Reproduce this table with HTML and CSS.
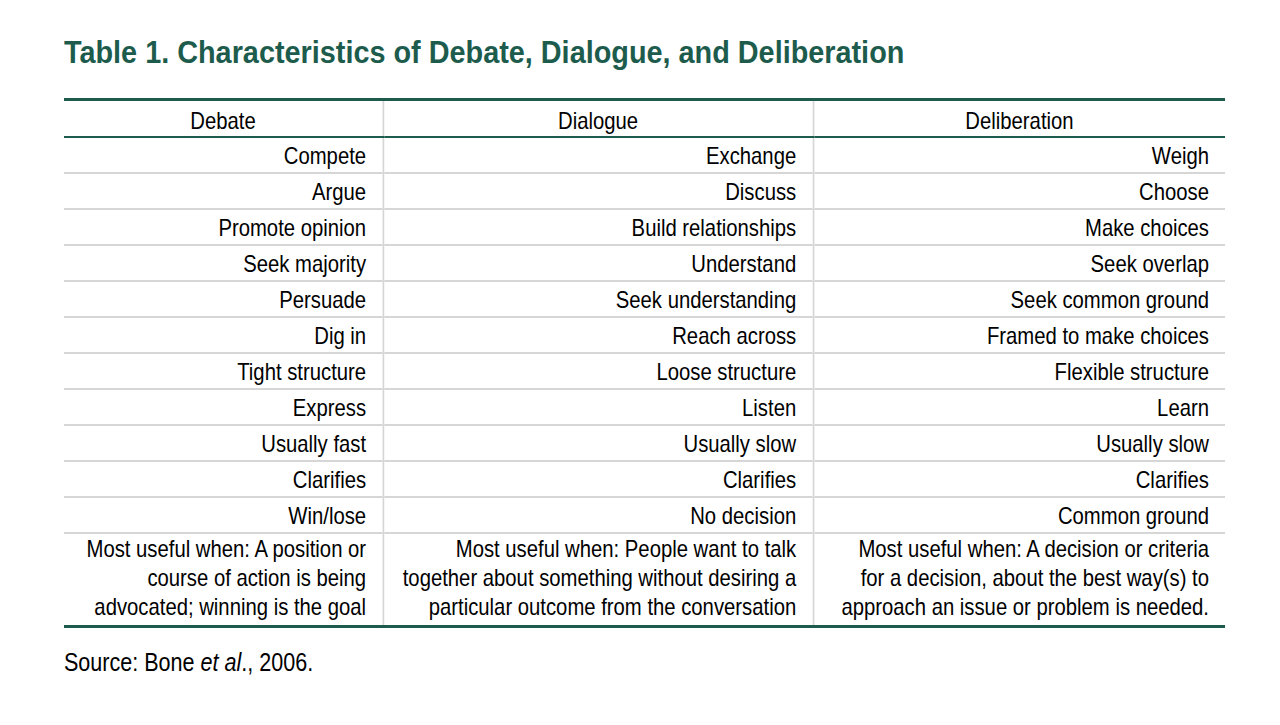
FILE: index.html
```html
<!DOCTYPE html>
<html>
<head>
<meta charset="utf-8">
<link rel="stylesheet" href="styles.css">
</head>
<body>
<div class="page">
  <div class="title-wrap">
    <h1 class="title">Table 1. Characteristics of Debate, Dialogue, and Deliberation</h1>
  </div>
  <div class="narrow">
    <table class="tbl">
      <colgroup>
        <col class="c1"><col class="c2"><col class="c3">
      </colgroup>
      <thead>
        <tr><th>Debate</th><th>Dialogue</th><th>Deliberation</th></tr>
      </thead>
      <tbody>
        <tr><td>Compete</td><td>Exchange</td><td>Weigh</td></tr>
        <tr><td>Argue</td><td>Discuss</td><td>Choose</td></tr>
        <tr><td>Promote opinion</td><td>Build relationships</td><td>Make choices</td></tr>
        <tr><td>Seek majority</td><td>Understand</td><td>Seek overlap</td></tr>
        <tr><td>Persuade</td><td>Seek understanding</td><td>Seek common ground</td></tr>
        <tr><td>Dig in</td><td>Reach across</td><td>Framed to make choices</td></tr>
        <tr><td>Tight structure</td><td>Loose structure</td><td>Flexible structure</td></tr>
        <tr><td>Express</td><td>Listen</td><td>Learn</td></tr>
        <tr><td>Usually fast</td><td>Usually slow</td><td>Usually slow</td></tr>
        <tr><td>Clarifies</td><td>Clarifies</td><td>Clarifies</td></tr>
        <tr><td>Win/lose</td><td>No decision</td><td>Common ground</td></tr>
        <tr class="last"><td>Most useful when: A position or<br>course of action is being<br>advocated; winning is the goal</td><td>Most useful when: People want to talk<br>together about something without desiring a<br>particular outcome from the conversation</td><td>Most useful when: A decision or criteria<br>for a decision, about the best way(s) to<br>approach an issue or problem is needed.</td></tr>
      </tbody>
    </table>
    <p class="source">Source: Bone <em>et al</em>., 2006.</p>
  </div>
</div>
</body>
</html>
```
FILE: styles.css
```css
html, body {
  margin: 0;
  padding: 0;
  background: #ffffff;
}
.page {
  padding: 32px 0 0 64px;
  font-family: "Liberation Sans", Arial, sans-serif;
  color: #000;
}
/* Emulate the condensed (Arial Narrow–like) face by drawing narrower */
.title-wrap {
  width: 1260px;
  transform: scaleX(0.915);
  transform-origin: 0 0;
}
.narrow {
  width: 1374px;
  transform: scaleX(0.845);
  transform-origin: 0 0;
}
.title {
  margin: 0;
  font-size: 31.5px;
  line-height: 40px;
  font-weight: bold;
  color: #1d5c4d;
  white-space: nowrap;
}
.tbl {
  margin-top: 26px;
  width: 1374px;
  table-layout: fixed;
  border-collapse: collapse;
  border-top: 3px solid #1d5c4d;
  border-bottom: 3px solid #1d5c4d;
  font-size: 24px;
}
.c1 { width: 377.5px; }
.c2 { width: 509px; }
.c3 { width: 487.5px; }
.tbl th {
  font-weight: normal;
  text-align: center;
  height: 34px;
  padding: 0 0 1px 0;
  border-bottom: 2px solid #1d5c4d;
  border-left: 2px solid #d6d6d6;
  line-height: 29px;
  vertical-align: bottom;
}
.tbl td {
  text-align: right;
  height: 34px;
  padding: 0 19px 0 8px;
  border-top: 2px solid #d6d6d6;
  border-left: 2px solid #d6d6d6;
  line-height: 29px;
  white-space: nowrap;
}
.tbl th:first-child, .tbl td:first-child {
  border-left: none;
}
.tbl tbody tr:first-child td {
  border-top: none;
}
.tbl tr.last td {
  height: 91px;
  padding-top: 0;
  padding-bottom: 0;
  vertical-align: top;
}
.source {
  margin: 19px 0 0 0;
  font-size: 25.5px;
  line-height: 30px;
}
```
